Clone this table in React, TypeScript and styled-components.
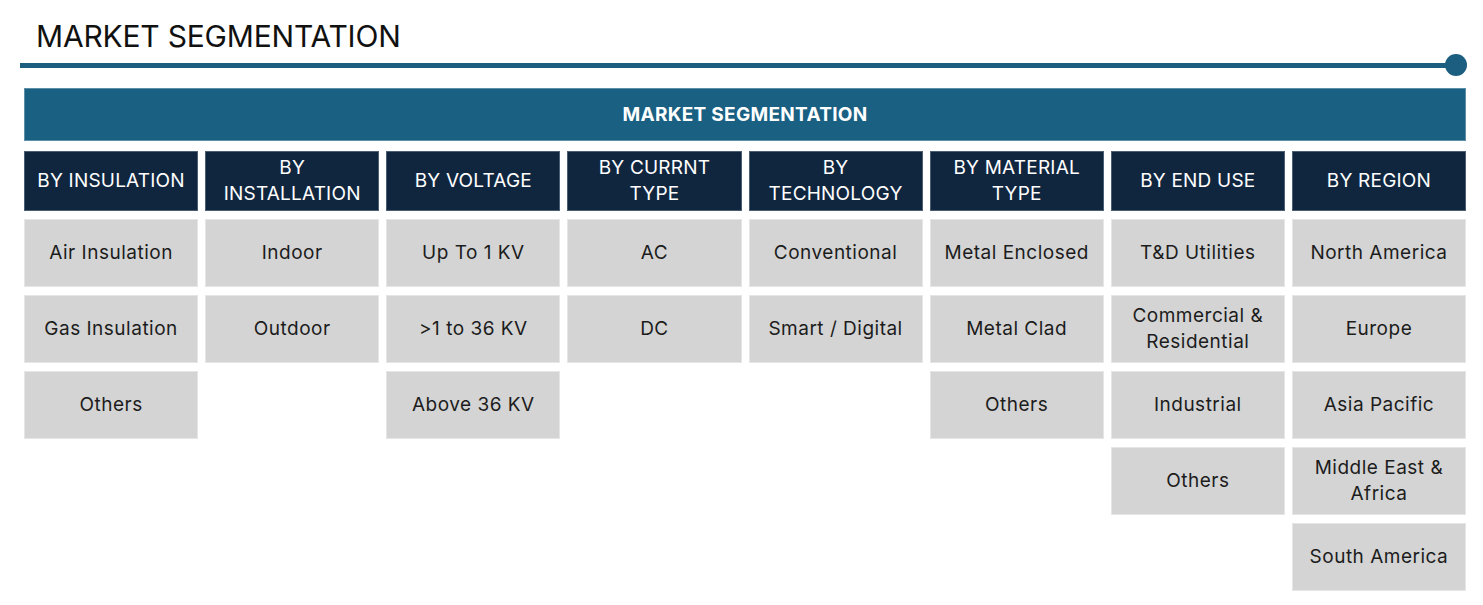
import * as React from "react";
import styled, { createGlobalStyle } from "styled-components";

const columns: { title: string[]; items: string[][] }[] = [
  { title: ["BY INSULATION"], items: [["Air Insulation"], ["Gas Insulation"], ["Others"]] },
  { title: ["BY", "INSTALLATION"], items: [["Indoor"], ["Outdoor"]] },
  { title: ["BY VOLTAGE"], items: [["Up To 1 KV"], [">1 to 36 KV"], ["Above 36 KV"]] },
  { title: ["BY CURRNT", "TYPE"], items: [["AC"], ["DC"]] },
  { title: ["BY", "TECHNOLOGY"], items: [["Conventional"], ["Smart / Digital"]] },
  { title: ["BY MATERIAL", "TYPE"], items: [["Metal Enclosed"], ["Metal Clad"], ["Others"]] },
  {
    title: ["BY END USE"],
    items: [["T&D Utilities"], ["Commercial &", "Residential"], ["Industrial"], ["Others"]],
  },
  {
    title: ["BY REGION"],
    items: [
      ["North America"],
      ["Europe"],
      ["Asia Pacific"],
      ["Middle East &", "Africa"],
      ["South America"],
    ],
  },
];

const Global = createGlobalStyle`
  body {
    margin: 0;
    background: #fff;
    font-family: Inter, "Noto Sans", sans-serif;
  }
`;

const Page = styled.div`
  width: 1483px;
  height: 605px;
  padding: 18px 0 0 20px;
  box-sizing: border-box;
`;

const Title = styled.h1`
  margin: 0 0 0 16px;
  font-size: 30px;
  font-weight: 400;
  line-height: 36px;
  color: #111;
  letter-spacing: -0.2px;
`;

const Rule = styled.div`
  display: flex;
  align-items: center;
  width: 1447px;
  height: 22px;
`;

const RuleLine = styled.div`
  flex: 1;
  height: 5px;
  background: #1b5e80;
`;

const RuleDot = styled.div`
  width: 22px;
  height: 22px;
  border-radius: 50%;
  background: #1b5e80;
  margin-left: -2px;
`;

const Board = styled.div`
  margin: 12px 0 0 4px;
  width: 1442px;
`;

const Banner = styled.div`
  height: 53px;
  background: #1a6083;
  color: #fff;
  font-weight: 700;
  font-size: 19px;
  letter-spacing: 0.3px;
  display: flex;
  align-items: center;
  justify-content: center;
  border: 1px solid #5d8fa9;
  box-sizing: border-box;
`;

const Grid = styled.div`
  display: grid;
  grid-template-columns: repeat(8, 1fr);
  column-gap: 7px;
  margin-top: 10px;
  align-items: start;
`;

const Column = styled.div`
  display: flex;
  flex-direction: column;
  gap: 8px;
`;

const Cell = styled.div<{ $head?: boolean }>`
  height: ${(p) => (p.$head ? 60 : 68)}px;
  background: ${(p) => (p.$head ? "#10263f" : "#d4d4d4")};
  color: ${(p) => (p.$head ? "#fff" : "#1c1c1c")};
  border: 1px solid ${(p) => (p.$head ? "#4b5f74" : "#e6e6e6")};
  box-sizing: border-box;
  display: flex;
  flex-direction: column;
  align-items: center;
  justify-content: center;
  text-align: center;
  font-size: 19px;
  line-height: 26px;
  letter-spacing: ${(p) => (p.$head ? "0.2px" : "0.5px")};
`;

export default function App() {
  return (
    <Page>
      <Global />
      <Title>MARKET SEGMENTATION</Title>
      <Rule>
        <RuleLine />
        <RuleDot />
      </Rule>
      <Board>
        <Banner>MARKET SEGMENTATION</Banner>
        <Grid>
          {columns.map((c, i) => (
            <Column key={i}>
              <Cell $head>
                {c.title.map((t) => (
                  <span key={t}>{t}</span>
                ))}
              </Cell>
              {c.items.map((it, j) => (
                <Cell key={j}>
                  {it.map((t) => (
                    <span key={t}>{t}</span>
                  ))}
                </Cell>
              ))}
            </Column>
          ))}
        </Grid>
      </Board>
    </Page>
  );
}
